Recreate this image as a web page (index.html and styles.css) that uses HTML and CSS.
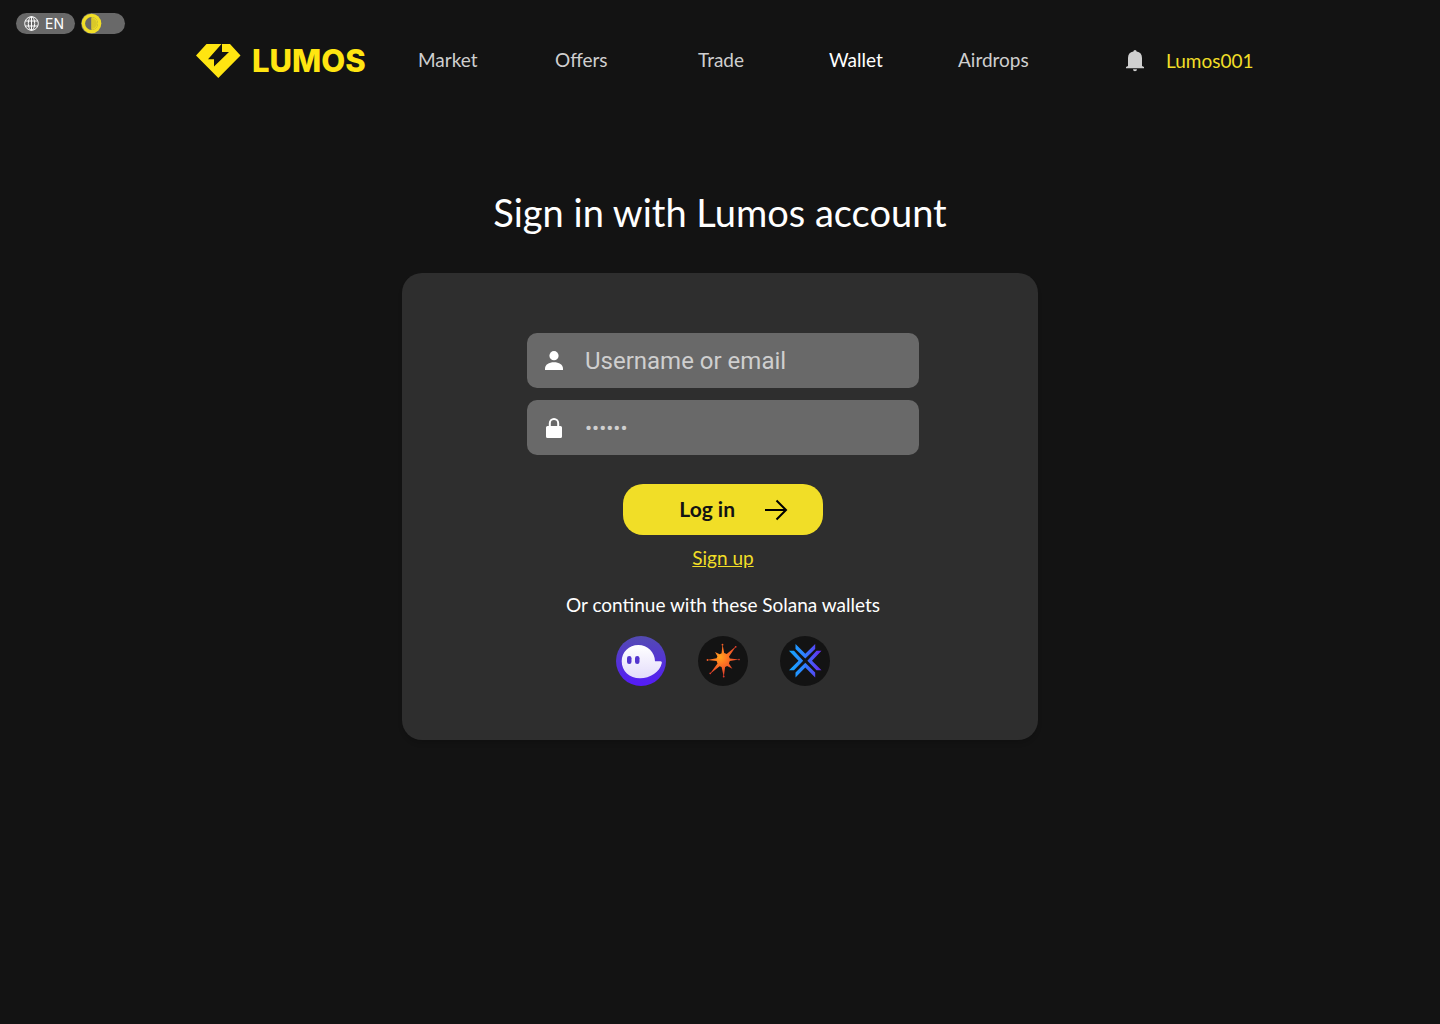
FILE: index.html
```html
<!DOCTYPE html>
<html lang="en">
<head>
<meta charset="utf-8">
<meta name="viewport" content="width=device-width, initial-scale=1">
<title>Lumos – Sign in</title>
<link rel="stylesheet" href="styles.css">
</head>
<body>
<div class="settings">
  <button class="language" type="button" aria-label="Language: English">
    <svg width="15" height="15" viewBox="0 0 15 15" fill="none" stroke="currentColor" aria-hidden="true"><circle cx="7.5" cy="7.5" r="6.8"/><ellipse cx="7.5" cy="7.5" rx="3.2" ry="6.8"/><path d="M1.4 5h12.2M1.4 10h12.2M7.5.7v13.6"/></svg>
    <span>EN</span>
  </button>
  <label class="theme">
    <input class="theme-input" type="checkbox" aria-label="Light theme">
    <svg class="theme-knob" width="21" height="21" viewBox="0 0 21 21" aria-hidden="true"><circle cx="10.5" cy="10.5" r="9.8" fill="#f1de27"/><circle cx="10.5" cy="10.5" r="6.4" fill="#696969"/><path d="M10.5 4.1a6.400 6.400 0 0 1 0 12.800z" fill="#f1de27"/><path d="M10.500 5.100a5.400 5.400 0 0 1 0 10.800z" fill="#d9c829"/></svg>
  </label>
</div>
<header class="header">
  <a class="logo" href="#">
    <svg width="45" height="34" viewBox="0 0 45 34" aria-hidden="true"><path fill="#ffe511" d="M10.500 0H25.500L12 15.300H18V22.500L33 8H26V0H34L44.500 11.500 22.300 34 0 11.500z"/></svg>
    <span>LUMOS</span>
  </a>
  <nav class="nav">
    <a href="#">Market</a>
    <a href="#">Offers</a>
    <a href="#">Trade</a>
    <a class="active" href="#">Wallet</a>
    <a href="#">Airdrops</a>
  </nav>
  <div class="account">
    <button class="bell" type="button" aria-label="Notifications">
      <svg width="18" height="22" viewBox="0 0 18 22" fill="#cfcfcf" aria-hidden="true"><path d="M9 0a1.600 1.600 0 0 1 1.600 1.600A6.500 6.500 0 0 1 16 8v8l2 1v1.200H0V17l2-1V8a6.500 6.500 0 0 1 5.400-6.400A1.600 1.600 0 0 1 9 0zM7 19.200h4a2 2 0 0 1-4 0z"/></svg>
    </button>
    <a class="user" href="#">Lumos001</a>
  </div>
</header>
<main class="main">
  <h1 class="title">Sign in with Lumos account</h1>
  <form class="card">
    <label class="field">
      <svg width="18" height="20" viewBox="0 0 18 20" fill="#fff" aria-hidden="true"><circle cx="9" cy="4.700" r="4.600"/><path d="M0 19v-1.500C0 13.600 4 11.200 9 11.200S18 13.600 18 17.500V19z"/></svg>
      <input type="text" placeholder="Username or email" aria-label="Username or email">
    </label>
    <label class="field">
      <svg width="18" height="20" viewBox="0 0 18 20" fill="#fff" aria-hidden="true"><path d="M3.800 8V5.200a5.200 5.200 0 0 1 10.400 0V8H15.500A1.500 1.500 0 0 1 17 9.500v9A1.500 1.500 0 0 1 15.500 20h-13A1.500 1.500 0 0 1 1 18.500v-9A1.500 1.500 0 0 1 2.500 8zM5.800 8h6.400V5.200a3.200 3.200 0 0 0-6.400 0z"/></svg>
      <input class="password" type="password" placeholder="••••••" aria-label="Password">
    </label>
    <button class="login" type="submit">
      <span>Log in</span>
      <svg width="24" height="22" viewBox="0 0 24 22" fill="none" stroke="#000" stroke-width="2" aria-hidden="true"><path d="M1 11h21M12.500 1.500 22 11l-9.500 9.500"/></svg>
    </button>
    <a class="signup" href="#">Sign up</a>
    <p class="hint">Or continue with these Solana wallets</p>
    <div class="wallets">
      <button class="wallet" type="button" aria-label="Phantom">
        <svg width="50" height="50" viewBox="0 0 50 50" aria-hidden="true"><defs><linearGradient id="ph" x1="0" y1="0" x2="0" y2="1"><stop offset="0" stop-color="#534bb1"/><stop offset="1" stop-color="#551bf9"/></linearGradient><linearGradient id="ghost" x1="0" y1="0" x2="0" y2="1"><stop offset="0" stop-color="#fff"/><stop offset="1" stop-color="#e3dcfb"/></linearGradient></defs><circle cx="25" cy="25" r="25" fill="url(#ph)"/><path fill="url(#ghost)" d="M39 25.300h5.500c1 0 1.500.8 1.300 1.700C44 36 34 42.300 24 42.300c-10.500 0-18.300-7.300-18.300-17C5.700 16 13 9 22.300 9 31.500 9 39 16.300 39 25.300z"/><rect x="11" y="20" width="4.500" height="8" rx="2.200" fill="#5334cf"/><rect x="19" y="20" width="4.500" height="8" rx="2.200" fill="#5334cf"/></svg>
      </button>
      <button class="wallet" type="button" aria-label="Solflare">
        <svg width="50" height="50" viewBox="0 0 50 50" aria-hidden="true"><defs><radialGradient id="sf" gradientUnits="userSpaceOnUse" cx="22" cy="21" r="19"><stop offset="0" stop-color="#ffa51e"/><stop offset=".35" stop-color="#ff7a22"/><stop offset="1" stop-color="#e33b2c"/></radialGradient></defs><circle cx="25" cy="25" r="25" fill="#131313"/><path fill="url(#sf)" d="M24.500 8l1.700 9 2.500 1L38.300 10 31 20.500l.8 2L41 23.600l-9.200 1.500-.9 2.500 3.500 5.200-5.300-2.800-2 .9L25.800 41 23.600 31l-2-.8-10 8L19.500 27.500l-.9-2.500L9 24l9.600-1.800.8-2L17 16l4.600 2.200 2-1z"/><g fill="url(#sf)"><circle cx="24.500" cy="8.700" r=".9"/><circle cx="25.700" cy="40.500" r=".9"/><circle cx="9.500" cy="24" r=".9"/><circle cx="41" cy="23.600" r=".8"/><circle cx="12.300" cy="37.300" r=".9"/><circle cx="37.700" cy="10.800" r=".9"/></g></svg>
      </button>
      <button class="wallet" type="button" aria-label="Exodus">
        <svg width="50" height="50" viewBox="0 0 50 50" aria-hidden="true"><defs><linearGradient id="ex" gradientUnits="userSpaceOnUse" x1="9" y1="0" x2="41" y2="0"><stop offset="0" stop-color="#13a8ff"/><stop offset=".45" stop-color="#2c85ff"/><stop offset="1" stop-color="#6728ef"/></linearGradient></defs><circle cx="25" cy="25" r="25" fill="#131313"/><path fill="url(#ex)" d="M15.500 8 25.300 17.800 35.200 8v5L25.300 22.600 15.500 13zM15.500 41.500 25.300 31.500l9.900 10v-5L25.300 26.700 15.500 36.500zM9 14.800h5L23.200 24.700 14 34.200H9l9.500-9.500zM41.500 14.800h-5L27.400 24.700l9.100 9.500h5L32 24.700z"/></svg>
      </button>
    </div>
  </form>
</main>
</body>
</html>
```
FILE: styles.css
```css
* { box-sizing: border-box; }
body {
  margin: 0;
  min-height: 100vh;
  background: #131313;
  color: #fff;
  font-family: Lato, "Liberation Sans", sans-serif;
  font-size: 19px;
  line-height: 22px;
}
a { color: inherit; text-decoration: none; }
button { border: 0; padding: 0; background: none; color: inherit; font: inherit; cursor: pointer; }
svg { display: block; flex: none; }

.settings { display: flex; gap: 6px; padding: 13px 16px 0; }
.language {
  display: flex;
  align-items: center;
  gap: 6px;
  width: 59px;
  height: 21px;
  padding-left: 8px;
  border-radius: 11px;
  background: #696969;
  font-family: Inter, sans-serif;
  font-size: 14px;
}
.theme { display: flex; width: 44px; height: 21px; border-radius: 11px; background: #696969; cursor: pointer; }
.theme-input { appearance: none; width: 0; height: 0; margin: 0; }

.header {
  display: flex;
  align-items: center;
  max-width: 1068px;
  height: 42px;
  margin: 6px auto 0;
  padding-left: 10px;
}
.logo {
  display: flex;
  align-items: center;
  gap: 11px;
  width: 222px;
  color: #ffe511;
  font-family: Inter, sans-serif;
  font-size: 31px;
  font-weight: 800;
  line-height: 34px;
}
.nav {
  display: grid;
  grid-template-columns: 137fr 143fr 131fr 129fr 168fr;
  flex: 1;
  padding-bottom: 2px;
  color: #cfcfcf;
}
.nav .active { color: #fff; }
.account { display: flex; align-items: center; gap: 22px; width: 128px; color: #f1de27; }

.main { padding: 0 24px; }
.title { margin: 106px 0 37px; font-size: 38px; font-weight: 400; line-height: 48px; text-align: center; }
.card {
  display: flex;
  flex-direction: column;
  align-items: center;
  max-width: 636px;
  margin: 0 auto 40px;
  padding: 60px 119px 54px 125px;
  border-radius: 20px;
  background: #2e2e2e;
  box-shadow: 0 4px 4px rgba(0, 0, 0, .12);
}
.field {
  display: flex;
  align-items: center;
  gap: 22px;
  width: 100%;
  max-width: 392px;
  height: 55px;
  margin-bottom: 12px;
  padding: 0 18px;
  border-radius: 10px;
  background: #696969;
}
.field input {
  flex: 1;
  min-width: 0;
  padding: 0;
  border: 0;
  outline: 0;
  background: none;
  color: #fff;
  font: 24px Roboto, sans-serif;
}
.field .password { font-size: 21px; }
.field input::placeholder { color: #cfcfcf; opacity: 1; }
.login {
  display: flex;
  align-items: center;
  justify-content: flex-end;
  gap: 29px;
  width: 200px;
  height: 51px;
  margin-top: 17px;
  padding-right: 35px;
  border-radius: 20px;
  background: #f1de27;
  color: #131313;
  font-size: 21px;
  font-weight: 700;
}
.login span { padding-bottom: 2px; }
.signup { margin-top: 12px; color: #f1de27; text-decoration: underline; }
.hint { margin: 25px 0 20px; }
.wallets { display: flex; gap: 32px; }
.wallet { border-radius: 50%; }
```
